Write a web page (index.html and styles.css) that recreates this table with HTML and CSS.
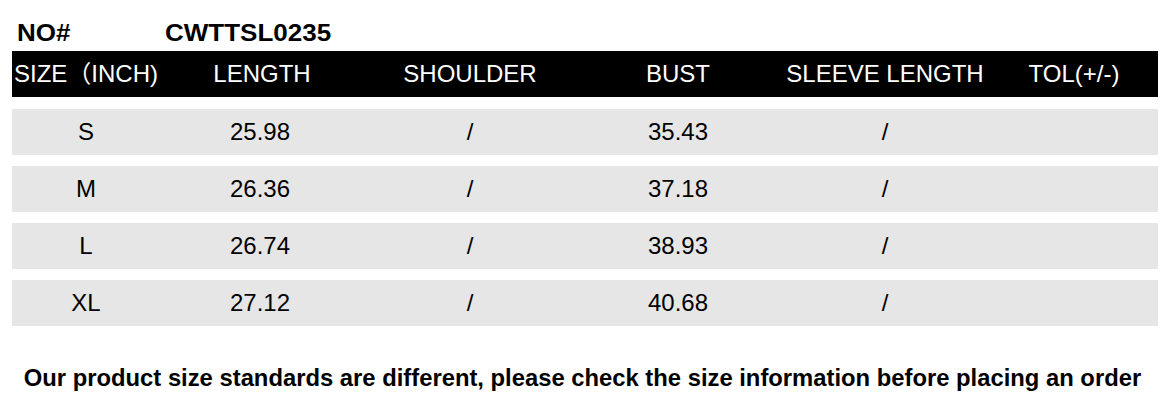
FILE: index.html
```html
<!DOCTYPE html>
<html>
<head>
<meta charset="utf-8">
<link rel="stylesheet" href="styles.css">
</head>
<body>
<div class="sheet">
  <div class="title">
    <span class="no">NO#</span><span class="code">CWTTSL0235</span>
  </div>
  <div class="table">
    <div class="row head">
      <div class="cell">SIZE（INCH)</div>
      <div class="cell">LENGTH</div>
      <div class="cell">SHOULDER</div>
      <div class="cell">BUST</div>
      <div class="cell">SLEEVE LENGTH</div>
      <div class="cell">TOL(+/-)</div>
    </div>
    <div class="rows">
      <div class="row data">
        <div class="cell">S</div>
        <div class="cell">25.98</div>
        <div class="cell">/</div>
        <div class="cell">35.43</div>
        <div class="cell">/</div>
        <div class="cell"></div>
      </div>
      <div class="row data">
        <div class="cell">M</div>
        <div class="cell">26.36</div>
        <div class="cell">/</div>
        <div class="cell">37.18</div>
        <div class="cell">/</div>
        <div class="cell"></div>
      </div>
      <div class="row data">
        <div class="cell">L</div>
        <div class="cell">26.74</div>
        <div class="cell">/</div>
        <div class="cell">38.93</div>
        <div class="cell">/</div>
        <div class="cell"></div>
      </div>
      <div class="row data">
        <div class="cell">XL</div>
        <div class="cell">27.12</div>
        <div class="cell">/</div>
        <div class="cell">40.68</div>
        <div class="cell">/</div>
        <div class="cell"></div>
      </div>
    </div>
  </div>
  <p class="note">Our product size standards are different, please check the size information before placing an order</p>
</div>
</body>
</html>
```

FILE: styles.css
```css
* { box-sizing: border-box; }
html, body { margin: 0; padding: 0; background: #fff; }
body {
  font-family: "Liberation Sans", Arial, "Noto Sans CJK SC", sans-serif;
  color: #000;
  width: 1165px;
  height: 411px;
  overflow: hidden;
}
.title {
  height: 51px;
  padding: 20px 0 0 17px;
  font-size: 23px;
  line-height: 27px;
  font-weight: bold;
  white-space: nowrap;
}
.title .no,
.title .code {
  display: inline-block;
  transform: scaleX(1.13);
  transform-origin: left center;
}
.title .no { width: 148px; }
.table {
  margin-left: 12px;
  width: 1146px;
}
.row {
  display: grid;
  grid-template-columns: 148px 204px 212px 204px 210px 1fr;
  height: 46px;
  align-items: center;
}
.cell {
  text-align: center;
  white-space: nowrap;
}
.head {
  background: #000;
  color: #fff;
  font-size: 24px;
  line-height: 44px;
  margin-bottom: 12px;
}
.rows {
  display: flex;
  flex-direction: column;
  gap: 11px;
}
.data {
  background: #e6e6e6;
  font-size: 24px;
  line-height: 46px;
}
.data .cell:nth-child(2) { padding-right: 4px; }
.note {
  margin: 38px 0 0;
  text-align: center;
  font-size: 23.8px;
  line-height: 28px;
  font-weight: bold;
  white-space: nowrap;
}
```
